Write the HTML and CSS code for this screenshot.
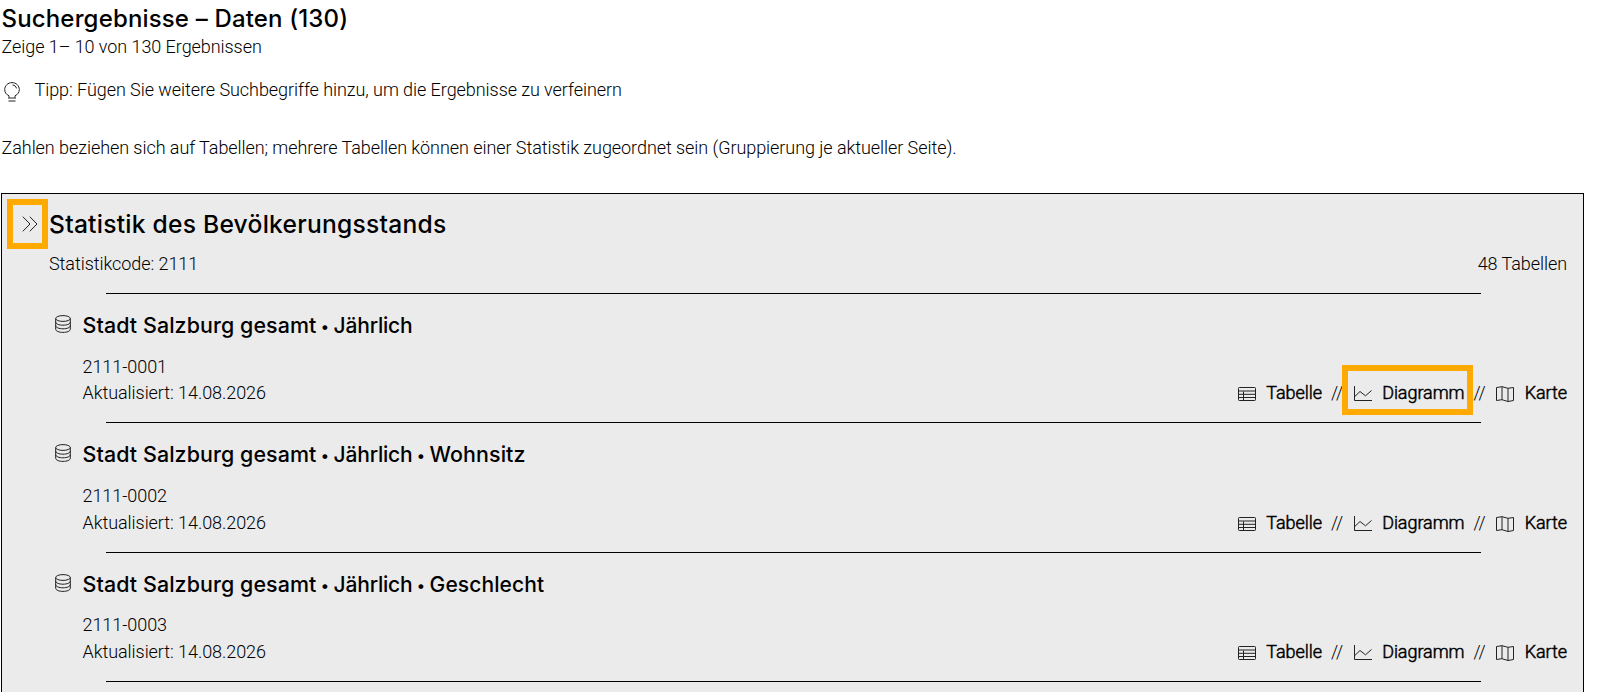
FILE: index.html
```html
<!DOCTYPE html>
<html lang="de">
<head>
<meta charset="utf-8">
<title>Suchergebnisse – Daten</title>
<link rel="stylesheet" href="styles.css">
</head>
<body>
<svg class="sprite" aria-hidden="true">
  <symbol id="i-db" viewBox="0 0 16 18"><ellipse cx="8" cy="3.500" rx="7.300" ry="2.900"/><path d="M.7 3.500v10.700c0 1.900 3.200 3.200 7.300 3.200s7.300-1.300 7.300-3.200V3.500M.7 7c0 1.900 3.200 3.200 7.300 3.200s7.300-1.300 7.300-3.200M.7 10.600c0 1.900 3.200 3.200 7.300 3.200s7.300-1.300 7.300-3.200"/></symbol>
  <symbol id="i-table" viewBox="0 0 18 14"><rect x=".5" y=".5" width="17" height="13" rx=".8"/><path d="M.5 4h17M5.500 4.500v9M.5 7.300h17M.5 10.500h17"/></symbol>
  <symbol id="i-chart" viewBox="0 0 18 15"><path d="M.5 0v14.500H18M1 10.300l5-4.800 5.500 4.300 6-5.300"/></symbol>
  <symbol id="i-map" viewBox="0 0 18 16"><path d="M.5 1.500l5.500-.8 6 1.600 5.500-.8v13l-5.500 1-6-1.800-5.500.8zM6 .7v13M12 2.300v13.200"/></symbol>
</svg>
<header class="head">
  <h1 class="title">Suchergebnisse – Daten (130)</h1>
  <p class="count">Zeige 1– 10 von 130 Ergebnissen</p>
  <p class="tip">
    <svg class="bulb" viewBox="0 0 16 20"><path d="M5 15.500v-1.700C2.200 12.500.7 10.200.7 7.700.7 3.700 3.900.6 8 .6s7.300 3.100 7.300 7.100c0 2.500-1.500 4.800-4.300 6.100v1.700M4 16h8M4.500 19h7M8.500 3c2.200.1 3.700 1.500 3.900 3.400"/></svg>
    <span>Tipp: Fügen Sie weitere Suchbegriffe hinzu, um die Ergebnisse zu verfeinern</span>
  </p>
  <p class="note">Zahlen beziehen sich auf Tabellen; mehrere Tabellen können einer Statistik zugeordnet sein (Gruppierung je aktueller Seite).</p>
</header>
<main class="card">
  <div class="card-head">
    <span class="toggle"><svg class="chevrons" viewBox="0 0 16 16"><path d="M.8.700 8 8 .8 15.300M7.800.700 15 8l-7.200 7.300"/></svg></span>
    <h2 class="stat-title">Statistik des Bevölkerungsstands</h2>
  </div>
  <div class="stat-meta"><span>Statistikcode: 2111</span><span>48 Tabellen</span></div>
  <section class="entry">
    <svg class="db"><use href="#i-db"/></svg>
    <h3 class="entry-title">Stadt Salzburg gesamt<span class="dot"> • </span><span class="tight">Jährlich</span></h3>
    <p class="code">2111-0001</p>
    <div class="row"><span>Aktualisiert: 14.08.2026</span>
      <nav class="links"><a class="link"><svg class="ic table"><use href="#i-table"/></svg>Tabelle</a><i class="sep">//</i><a class="link marked"><svg class="ic chart"><use href="#i-chart"/></svg>Diagramm</a><i class="sep">//</i><a class="link"><svg class="ic map"><use href="#i-map"/></svg>Karte</a></nav></div>
  </section>
  <section class="entry">
    <svg class="db"><use href="#i-db"/></svg>
    <h3 class="entry-title">Stadt Salzburg gesamt<span class="dot"> • </span><span class="tight">Jährlich</span><span class="dot"> • </span>Wohnsitz</h3>
    <p class="code">2111-0002</p>
    <div class="row"><span>Aktualisiert: 14.08.2026</span>
      <nav class="links"><a class="link"><svg class="ic table"><use href="#i-table"/></svg>Tabelle</a><i class="sep">//</i><a class="link"><svg class="ic chart"><use href="#i-chart"/></svg>Diagramm</a><i class="sep">//</i><a class="link"><svg class="ic map"><use href="#i-map"/></svg>Karte</a></nav></div>
  </section>
  <section class="entry">
    <svg class="db"><use href="#i-db"/></svg>
    <h3 class="entry-title">Stadt Salzburg gesamt<span class="dot"> • </span><span class="tight">Jährlich</span><span class="dot"> • </span><span class="tight">Geschlecht</span></h3>
    <p class="code">2111-0003</p>
    <div class="row"><span>Aktualisiert: 14.08.2026</span>
      <nav class="links"><a class="link"><svg class="ic table"><use href="#i-table"/></svg>Tabelle</a><i class="sep">//</i><a class="link"><svg class="ic chart"><use href="#i-chart"/></svg>Diagramm</a><i class="sep">//</i><a class="link"><svg class="ic map"><use href="#i-map"/></svg>Karte</a></nav></div>
  </section>
  <hr class="rule">
</main>
</body>
</html>
```
FILE: styles.css
```css
*, *::before, *::after { box-sizing: border-box; }
html, body { height: 100%; }
body {
  margin: 0;
  overflow: hidden;
  background: #fff;
  color: #000;
  font: 300 18px/27px Roboto, "Liberation Sans", sans-serif;
  letter-spacing: -.06px;
  display: flex;
  flex-direction: column;
}
h1, h2, h3, p { margin: 0; white-space: nowrap; }
h1, h2, h3 { font-family: Inter, "Liberation Sans", sans-serif; font-weight: 500; }
svg { fill: none; stroke: #222; stroke-width: 1; flex: none; }
.sprite { position: absolute; width: 0; height: 0; }
.head { height: 193px; padding: 4px 0 0 1.5px; flex: none; }
.title { font-size: 24px; line-height: 29px; letter-spacing: .16px; }
.tip { display: flex; gap: 15px; margin-top: 16px; padding-left: 2px; }
.bulb { width: 16px; height: 20px; margin-top: 6px; }
.note { margin-top: 31px; }
.card {
  flex: 1 0 520px;
  width: 1583px;
  margin-left: 1px;
  padding: 1px 16px 0 5px;
  background: #ebebeb;
  border: 1px solid #000;
}
.card-head { display: flex; align-items: center; height: 58px; }
.toggle {
  width: 41px;
  height: 50px;
  border: 6px solid #fa0;
  display: flex;
  align-items: center;
  justify-content: flex-end;
  padding-right: 4px;
}
.chevrons { width: 16px; height: 16px; }
.stat-title { font-size: 24.600px; line-height: 30px; letter-spacing: .25px; margin-left: 1px; }
.stat-meta { display: flex; justify-content: space-between; height: 40px; line-height: 21px; padding-left: 42px; }
.entry {
  position: relative;
  height: 129.33px;
  padding: 18px 0 0 75.500px;
}
.entry::before, .rule {
  content: "";
  display: block;
  height: 1px;
  width: 1375px;
  background: #000;
}
.entry::before { margin: -18px 0 16px 23px; }
.rule { border: 0; margin: 0 0 0 98.500px; }
.db { position: absolute; left: 48px; top: 22px; width: 16px; height: 18px; }
.entry-title { font-size: 21.400px; line-height: 30px; letter-spacing: .1px; }
.dot { font-size: 15.500px; line-height: 1; white-space: pre; letter-spacing: .2px; position: relative; top: -1px; }
.tight { font-size: 21px; letter-spacing: -.2px; }
.tight:last-child:nth-child(4) { letter-spacing: .1px; }
.code { margin-top: 12.700px; line-height: 26.500px; }
.row { display: flex; justify-content: space-between; line-height: 26.500px; }
.links { display: flex; }
.link { display: flex; position: relative; -webkit-text-stroke: .5px #000; }
.ic { width: 18px; margin-right: 10px; }
.table { height: 14px; margin-top: 7px; }
.chart { height: 15px; margin-top: 6px; }
.map { height: 16px; margin: 6px 11px 0 -1px; }
.sep { font-style: normal; margin: 0 11px 0 9px; }
.marked::after {
  content: "";
  position: absolute;
  left: -12px;
  top: -15.500px;
  width: 131px;
  height: 50px;
  border: 6px solid #fa0;
}
```
